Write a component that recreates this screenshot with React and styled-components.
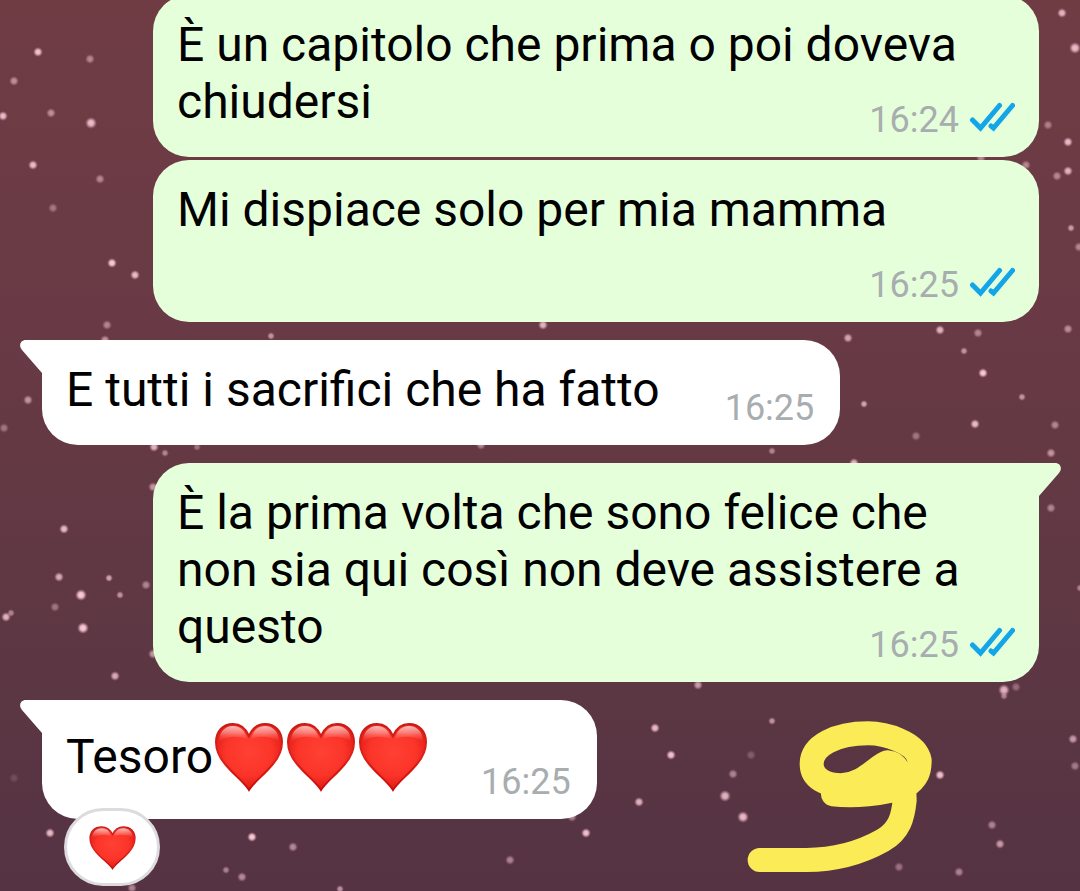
import React from 'react';
import styled, { createGlobalStyle } from 'styled-components';

const GlobalStyle = createGlobalStyle`
  * {
    box-sizing: border-box;
  }

  body {
    margin: 0;
    background: #5f3843;
    font-family: Roboto, 'Noto Sans', sans-serif;
  }
`;

const Screen = styled.main`
  position: relative;
  display: flex;
  flex-direction: column;
  justify-content: flex-end;
  height: 100vh;
  overflow: hidden;
  background: linear-gradient(to bottom, #6f3c44 0%, #693a45 35%, #5f3843 65%, #553343 100%);
`;

const Wallpaper = styled.svg`
  position: absolute;
  inset: 0;
  width: 100%;
  height: 100%;
`;

const Chat = styled.ol`
  position: relative;
  display: flex;
  flex-direction: column;
  flex-shrink: 0;
  gap: 18px;
  margin: 0;
  padding: 0 41px 72px 42px;
  list-style: none;
`;

const Group = styled.li`
  display: flex;
  flex-direction: column;
  align-items: ${(props) => (props.$mine ? 'flex-end' : 'flex-start')};
  gap: 3px;
`;

const Bubble = styled.article`
  position: relative;
  display: flow-root;
  max-width: calc(100% - 111px);
  padding: 21px ${(props) => (props.$mine ? '24px' : '26px')} 16px 24px;
  border-radius: 36px;
  border-top-left-radius: ${(props) => (props.$tail && !props.$mine ? '0' : '36px')};
  border-top-right-radius: ${(props) => (props.$tail && props.$mine ? '0' : '36px')};
  background: ${(props) => (props.$mine ? '#e5ffdb' : '#ffffff')};
  color: #000000;
  font-size: 48px;
  line-height: 57px;
`;

const Tail = styled.svg`
  position: absolute;
  top: 0;
  ${(props) => (props.$mine ? 'left: 100%;' : 'right: 100%;')}
  width: 22px;
  height: 34px;
  fill: ${(props) => (props.$mine ? '#e5ffdb' : '#ffffff')};
`;

const Meta = styled.span`
  float: right;
  display: flex;
  align-items: center;
  gap: 10px;
  margin-top: ${(props) => (props.$tall ? '40px' : '26px')};
  margin-left: ${(props) => (props.$tall ? '52px' : '65px')};
  color: #a8adb0;
  font-size: 36px;
  line-height: 42px;
`;

const Ticks = styled.svg`
  width: 46px;
  height: 36px;
  fill: none;
  stroke: #12a5e8;
  stroke-width: 5;
  stroke-linecap: round;
`;

const InlineHeart = styled.svg`
  width: 72px;
  height: 71px;
  vertical-align: -19px;
`;

const Reaction = styled.button`
  position: absolute;
  top: calc(100% - 11px);
  left: 22px;
  display: flex;
  align-items: center;
  justify-content: center;
  width: 96px;
  height: 78px;
  padding: 0;
  border: 3px solid #dddbdf;
  border-radius: 39px;
  background: #ffffff;

  svg {
    width: 49px;
    height: 45px;
  }
`;

const Doodle = styled.svg`
  position: absolute;
  right: 145px;
  bottom: 16px;
  width: 190px;
  height: 156px;
  fill: none;
  stroke: #fbec57;
  stroke-width: 72;
  stroke-linecap: round;
  stroke-linejoin: round;
`;

// x, y, radius, opacity
const stars = [
  [38, 52, 3, 0.9], [90, 59, 3, 0.5], [14, 81, 3, 0.55], [3, 116, 3, 0.85],
  [51, 113, 3, 0.55], [91, 123, 4, 0.85], [33, 165, 3, 0.85], [100, 179, 3, 0.5],
  [53, 208, 3, 0.4], [112, 263, 3, 0.95], [135, 275, 3, 0.85], [107, 325, 3, 0.5],
  [105, 340, 3, 0.6], [28, 400, 3, 0.6], [4, 428, 3, 0.4], [154, 447, 3, 0.8],
  [165, 453, 2, 0.5], [197, 447, 2, 0.4], [153, 487, 3, 0.6], [271, 336, 2, 0.6],
  [64, 529, 3, 0.85], [59, 577, 3, 0.75], [81, 595, 4, 0.95], [55, 607, 3, 0.4],
  [109, 578, 2, 0.7], [120, 595, 2, 0.6], [146, 585, 3, 0.5], [6, 617, 3, 0.8],
  [11, 613, 2, 0.5], [83, 628, 4, 0.95], [153, 654, 3, 0.6], [115, 676, 3, 0.75],
  [14, 778, 3, 0.15], [50, 833, 3, 0.85], [132, 888, 3, 0.5], [252, 837, 3, 0.95],
  [293, 847, 3, 0.55], [226, 870, 2, 0.5], [242, 877, 3, 0.55], [340, 889, 2, 0.6],
  [510, 860, 3, 0.5], [572, 817, 3, 0.5], [586, 833, 3, 0.9], [543, 325, 3, 0.8],
  [848, 338, 3, 0.7], [940, 330, 3, 0.8], [978, 333, 3, 0.5], [964, 351, 2, 0.6],
  [983, 373, 3, 0.95], [1068, 329, 3, 0.55], [864, 404, 2, 0.7], [1022, 397, 2, 0.6],
  [975, 424, 3, 0.85], [916, 436, 3, 0.4], [1055, 425, 3, 0.5], [1051, 453, 3, 0.6],
  [772, 451, 2, 0.5], [854, 463, 3, 0.8], [481, 445, 3, 0.5], [1051, 508, 3, 0.5],
  [1062, 13, 3, 0.8], [1075, 48, 4, 0.85], [1048, 125, 3, 0.45], [1068, 142, 3, 0.85],
  [1068, 171, 3, 0.8], [1057, 176, 3, 0.5], [1071, 228, 2, 0.65], [1079, 247, 3, 0.5],
  [981, 158, 3, 0.5], [1026, 165, 3, 0.5], [1080, 588, 2, 0.5], [698, 685, 3, 0.65],
  [655, 728, 3, 0.85], [671, 755, 3, 0.9], [772, 721, 2, 0.6], [751, 755, 3, 0.25],
  [733, 774, 3, 0.5], [639, 802, 3, 0.8], [725, 796, 4, 0.8], [743, 817, 4, 0.85],
  [1004, 690, 4, 0.8], [1004, 696, 2, 0.5], [1016, 687, 3, 0.35], [1073, 739, 3, 0.65],
  [1075, 766, 3, 0.45], [940, 775, 3, 0.9], [992, 825, 3, 0.5], [1000, 844, 3, 0.65],
  [899, 867, 3, 0.4], [959, 872, 3, 0.5],
];

const groups = [
  {
    mine: true,
    messages: [
      { text: 'È un capitolo che prima o poi doveva chiudersi', time: '16:24' },
      { text: 'Mi dispiace solo per mia mamma', time: '16:25' },
    ],
  },
  { tail: true, messages: [{ text: 'E tutti i sacrifici che ha fatto', time: '16:25' }] },
  {
    mine: true,
    tail: true,
    messages: [
      {
        text: 'È la prima volta che sono felice che non sia qui così non deve assistere a questo',
        time: '16:25',
      },
    ],
  },
  { tail: true, messages: [{ text: 'Tesoro', hearts: 3, time: '16:25', reaction: true }] },
];

const HeartShape = () => (
  <>
    <path
      d="M36 69C31 61 21 54 12 43C6 36 3 29 3 21C3 10 10 3 20 3C28 3 33 8 36 15C39 8 44 3 52 3C62 3 69 10 69 21C69 29 66 36 60 43C51 54 41 61 36 69Z"
      fill="url(#heartFill)"
      stroke="url(#heartEdge)"
      strokeWidth="2"
    />
    <path d="M6 21C6 11 12 5 20 5C28 5 32 10 34 18C28 15 13 14 6 21Z" fill="url(#heartShine)" />
    <path d="M66 21C66 11 60 5 52 5C44 5 40 10 38 18C44 15 59 14 66 21Z" fill="url(#heartShine)" />
  </>
);

const App = () => (
  <Screen>
    <GlobalStyle />
    <Wallpaper viewBox="0 0 1080 891" preserveAspectRatio="xMidYMid slice" aria-hidden="true">
      <defs>
        <radialGradient id="star">
          <stop offset="0" stopColor="#ffdce6" />
          <stop offset="0.45" stopColor="#f3bfcd" />
          <stop offset="1" stopColor="#c78b9c" stopOpacity="0" />
        </radialGradient>
        <radialGradient id="heartFill" cx="0.5" cy="0.42" r="0.6">
          <stop offset="0" stopColor="#ff4133" />
          <stop offset="0.6" stopColor="#fb3429" />
          <stop offset="1" stopColor="#dc1712" />
        </radialGradient>
        <linearGradient id="heartEdge" x1="0" y1="0" x2="0" y2="1">
          <stop offset="0" stopColor="#c91a15" />
          <stop offset="0.5" stopColor="#dd211b" />
          <stop offset="1" stopColor="#c90c08" />
        </linearGradient>
        <linearGradient id="heartShine" x1="0" y1="0" x2="0" y2="1">
          <stop offset="0" stopColor="#ffffff" stopOpacity="0.7" />
          <stop offset="0.4" stopColor="#ffd0cc" stopOpacity="0.5" />
          <stop offset="1" stopColor="#ff6a60" stopOpacity="0" />
        </linearGradient>
      </defs>
      {stars.map(([x, y, r, opacity]) => (
        <circle key={`${x}-${y}`} cx={x} cy={y} r={r + 2} opacity={opacity} fill="url(#star)" />
      ))}
    </Wallpaper>

    <Chat>
      {groups.map((group, index) => (
        <Group key={index} $mine={group.mine}>
          {group.messages.map((message) => (
            <Bubble key={message.text} $mine={group.mine} $tail={group.tail}>
              {group.tail && (
                <Tail $mine={group.mine} viewBox="0 0 22 34" aria-hidden="true">
                  <path
                    d={
                      group.mine
                        ? 'M0 0H16C22 0 23.500 6 20 10L0 33Z'
                        : 'M22 0H6C0 0 -1.500 6 2 10L22 33Z'
                    }
                  />
                </Tail>
              )}
              {message.text}
              {Array.from({ length: message.hearts || 0 }, (_, i) => (
                <InlineHeart key={i} viewBox="0 0 72 71" role="img" aria-label="cuore">
                  <HeartShape />
                </InlineHeart>
              ))}
              <Meta $tall={message.hearts > 0}>
                <time>{message.time}</time>
                {group.mine && (
                  <Ticks viewBox="0 0 46 36" role="img" aria-label="Letto">
                    <path d="M3.500 18L11.500 26L30.500 3.500" />
                    <path d="M22 24L24.500 26L43.500 3.500" />
                  </Ticks>
                )}
              </Meta>
              {message.reaction && (
                <Reaction type="button" aria-label="Reazione: cuore">
                  <svg viewBox="0 0 72 71" preserveAspectRatio="none" aria-hidden="true">
                    <HeartShape />
                  </svg>
                </Reaction>
              )}
            </Bubble>
          ))}
        </Group>
      ))}
    </Chat>

    <Doodle viewBox="466 146 570 468" aria-hidden="true">
      <path d="M730 372C790 380 880 372 945 350C985 325 990 300 990 270C980 215 885 189 835 189C740 189 666 225 666 281C666 325 710 345 755 345C825 342 862 285 893 276C925 278 945 320 945 390C940 440 930 480 880 510C800 555 720 569 650 569H510" />
      <path d="M800 362L915 322" />
    </Doodle>
  </Screen>
);

export default App;
